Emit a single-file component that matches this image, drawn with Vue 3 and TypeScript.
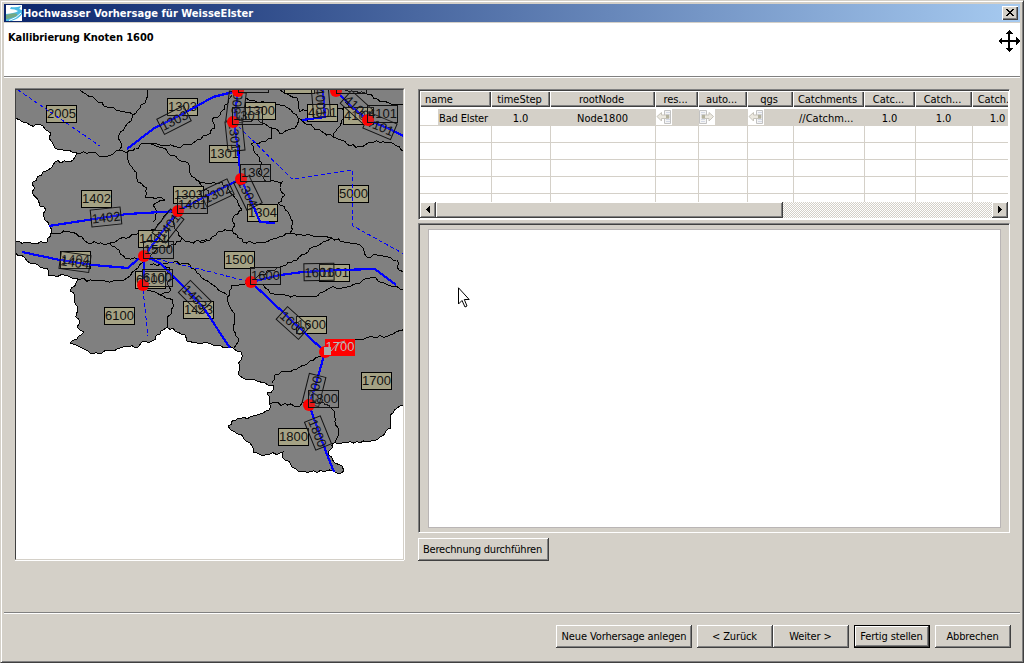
<script setup lang="ts">
type Point = [number, number]
interface Label { x: number; y: number; text: string }
interface TurnedLabel extends Label { angle: number }

function parse(source: string): Point[] {
  return source.trim().split(/\s+/).map((p) => p.split(',').map(Number) as Point)
}

function straight(source: string): string {
  return 'M' + parse(source).map((p) => p.join(' ')).join('L')
}

// Breaks a border into short steps so that it reads as a natural watershed line.
function rough(source: string): string {
  const points = parse(source)
  const out: string[] = []
  points.forEach((p, i) => {
    out.push(`${p[0]} ${p[1]}`)
    const next = points[i + 1]
    if (!next) return
    const dx = next[0] - p[0]
    const dy = next[1] - p[1]
    const length = Math.hypot(dx, dy)
    if ((p[0] <= 15 && next[0] <= 15) || (p[0] >= 404 && next[0] >= 404)) return
    const steps = Math.floor(length / 3)
    for (let k = 1; k < steps; k++) {
      const t = k / steps
      const seed = Math.sin((p[0] + dx * t) * 12.99 + (p[1] + dy * t) * 78.23) * 43758.5
      const offset = (seed - Math.floor(seed) - 0.5) * 3
      out.push(`${(p[0] + dx * t - (dy / length) * offset).toFixed(1)} ${(p[1] + dy * t + (dx / length) * offset).toFixed(1)}`)
    }
  })
  return 'M' + out.join('L')
}

const land = rough('15,88 15,118 23,122 30,125 43,126 46,130 51,133 49,138 52,142 55,148 63,150 77,153 75,157 70,162 55,162 52,167 43,172 33,182 35,188 32,192 38,200 40,206 46,210 44,217 49,225 51,233 47,242 34,243 28,242 16,242 15,252 25,258 30,263 47,268 48,275 70,277 78,279 70,291 75,295 75,303 78,308 76,317 80,323 77,327 84,332 70,343 82,348 90,353 102,353 123,347 138,347 143,341 152,341 167,327 185,335 187,341 197,343 213,345 233,348 241,352 241,360 238,373 243,378 255,380 265,383 273,385 274,389 267,393 270,398 269,410 257,415 247,419 238,418 228,426 235,432 243,437 250,443 253,452 263,456 283,452 283,458 298,471 333,471 340,474 344,471 342,466 335,463 328,455 332,444 347,443 367,442 380,437 391,428 390,418 397,408 404,406 405,88')

const borders = [
  '80,90 93,97 107,107 127,113 133,115',
  '148,90 146,100 140,108 133,115 131,121 125,127 119,135 121,143 119,151',
  '77,153 93,152 102,157 113,154 120,150 127,153 135,148 147,143 160,145 177,147 190,145 197,140 207,135 215,128 212,120 220,115 225,105 232,95',
  '127,153 130,165 137,173 138,182 147,188 145,197 160,197 165,200 153,205 157,213 153,222',
  '147,143 163,148 170,155 188,163 190,173 200,182 210,184 222,182 233,195 242,210 233,218 235,225 232,230 218,232 210,240 200,242',
  '238,120 250,122 258,120 272,128',
  '246,98 257,102 280,105 288,108 298,118 295,128 283,133 272,128 272,138 265,142 251,144 255,153 262,163 258,173 268,182 282,182 280,188 285,195 278,203 288,212 293,222 290,233',
  '280,90 297,98 300,112 317,107 350,110 342,120 333,137 347,144 362,147 370,142 390,142 404,152',
  '298,118 313,127 333,137',
  '345,90 365,93 383,102 404,105',
  '350,110 345,99 340,94',
  '232,230 243,242 260,243 277,238 290,233 310,235 332,238',
  '251,282 262,274 280,267 297,260 313,247 332,238 350,243 360,245 367,257 377,255 397,260 399,270 404,272',
  '263,285 270,293 285,295 300,297 315,297 330,288 347,287 360,283 372,277 388,285 404,289',
  '250,283 232,285 230,295 227,297 230,307 235,317 233,327 238,338 234,348',
  '150,265 170,262 190,265 197,273 210,283 217,288 227,295',
  '325,350 334,343 347,340 373,337 390,335 404,328',
  '272,383 275,375 293,370 310,361 323,355',
  '269,403 300,406 305,402 323,402 335,413 335,422 339,432 335,442 331,446',
  '51,233 70,232 82,237 88,243 110,243 135,235 155,230 164,216 177,211',
  '110,243 117,249 125,258 140,260',
  '78,279 93,281 113,281 127,278 135,270 143,262',
  '147,290 160,295 173,300 172,312 167,320 167,327',
  '150,257 160,247 175,245 182,238 190,242 210,241',
  '182,238 175,229 173,221 181,213',
  '154,278 165,276 170,268 158,264',
  '160,295 171,290 167,283 176,278',
  '198,180 203,191 209,191 208,199',
].map(rough)

const rivers = [
  '127,149 153,129 190,110 213,97 233,92 238,91',
  '49,226 127,214 178,211',
  '238,91 234,122 238,150 241,179',
  '241,179 206,196 178,211 160,235 147,252',
  '241,179 255,210 260,222 275,223',
  '302,120 325,117 323,90',
  '336,91 352,107 368,120 385,127 404,136',
  '22,252 60,260 93,265 128,268 138,259 144,256 144,285',
  '144,256 160,263 185,288 203,307 230,348',
  '251,282 280,275 303,272 340,270 375,269 396,285',
  '251,282 325,352 315,387 309,405 326,452 334,472',
].map(straight)

const dashed = [
  '18,90 100,146',
  '234,122 292,179 352,170 353,226 404,254',
  '144,256 203,270 250,282',
  '143,290 148,336',
].map(straight)

const catchments: Label[] = [
  { x: 46, y: 105, text: '2005' }, { x: 167, y: 98, text: '1303' },
  { x: 81, y: 190, text: '1402' }, { x: 173, y: 186, text: '1303' },
  { x: 138, y: 230, text: '1401' }, { x: 60, y: 251, text: '1404' },
  { x: 135, y: 271, text: '6100' }, { x: 104, y: 307, text: '6100' },
  { x: 183, y: 301, text: '1453' }, { x: 245, y: 102, text: '1300' },
  { x: 209, y: 145, text: '1301' }, { x: 247, y: 204, text: '1304' },
  { x: 338, y: 185, text: '5000' }, { x: 307, y: 104, text: '4001' },
  { x: 343, y: 107, text: '4101' }, { x: 284, y: 76, text: '4000' },
  { x: 224, y: 251, text: '1500' }, { x: 319, y: 264, text: '1601' },
  { x: 296, y: 316, text: '1600' }, { x: 361, y: 372, text: '1700' },
  { x: 278, y: 428, text: '1800' },
]

const nodeLabels: Label[] = [
  { x: 177, y: 196, text: '1401' }, { x: 143, y: 241, text: '1500' },
  { x: 142, y: 269, text: '6100' }, { x: 232, y: 107, text: '1301' },
  { x: 240, y: 164, text: '1302' }, { x: 367, y: 105, text: '4101' },
  { x: 238, y: 75, text: '1300' }, { x: 336, y: 76, text: '4100' },
  { x: 250, y: 267, text: '1600' }, { x: 308, y: 390, text: '1800' },
]

const riverLabels: TurnedLabel[] = [
  { x: 174, y: 120, text: '1303', angle: -27 }, { x: 106, y: 217, text: '1402', angle: -6 },
  { x: 75, y: 262, text: '1404', angle: 8 }, { x: 217, y: 193, text: '1302', angle: -25 },
  { x: 248, y: 193, text: '1304', angle: 64 }, { x: 236, y: 107, text: '1300', angle: -83 },
  { x: 235, y: 136, text: '1301', angle: 84 }, { x: 195, y: 297, text: '1453', angle: 45 },
  { x: 168, y: 226, text: '1401', angle: -52 }, { x: 293, y: 323, text: '1600', angle: 42 },
  { x: 319, y: 272, text: '1601', angle: -1 }, { x: 314, y: 390, text: '1700', angle: -76 },
  { x: 318, y: 433, text: '1800', angle: 68 }, { x: 321, y: 102, text: '4001', angle: 85 },
  { x: 357, y: 107, text: '4100', angle: 42 }, { x: 380, y: 126, text: '4101', angle: 23 },
]

const nodes: Point[] = [[238, 91], [233, 122], [241, 179], [178, 211], [144, 256], [143, 285], [251, 282], [325, 352], [309, 405], [336, 91], [368, 120]]

const columns = ['name', 'timeStep', 'rootNode', 'res...', 'auto...', 'qgs', 'Catchments', 'Catc...', 'Catch...', 'Catch...']
const emptyRows = 5
</script>

<template>
  <main class="window">
    <header class="titlebar">
      <svg class="logo" width="16" height="16" viewBox="0 0 16 16">
        <rect width="16" height="16" fill="#fff" />
        <path d="M5 2Q10 3 15 1L14 3Q12 4 16 5V9Q13 14 5 16H0V9Q10 8 12 6Q9 4 4 4Z" fill="#4bbbe4" />
        <path d="M0 10Q9 7 11 9T5 13Q2 14 0 14Z" fill="#74a884" />
        <path d="M3 15.500Q11 13 15 8" stroke="#fff" fill="none" />
      </svg>
      <h1>Hochwasser Vorhersage für WeisseElster</h1>
      <button class="close" aria-label="Schließen">
        <svg width="8" height="7" viewBox="0 0 8 7" shape-rendering="crispEdges"><path d="M0 0h2v1h1v1h2v-1h1v-1h2v1h-1v1h-1v1h-1v1h1v1h1v1h1v1h-2v-1h-1v-1h-2v1h-1v1h-2v-1h1v-1h1v-1h1v-1h-1v-1h-1v-1h-1z" /></svg>
      </button>
    </header>

    <section class="banner">
      <h2>Kallibrierung Knoten 1600</h2>
      <svg width="22" height="22" viewBox="0 0 22 22" shape-rendering="crispEdges">
        <path d="M10 2h2v8h8v2h-8v8h-2v-8h-8v-2h8z" />
        <path d="M11 0L15 4H7ZM11 22L15 18H7ZM0 11L4 7V15ZM22 11L18 7V15Z" />
      </svg>
    </section>

    <section class="content">
      <div class="map">
        <svg width="387" height="469" viewBox="16 90 387 469">
          <g shape-rendering="crispEdges">
            <path :d="land" fill="#808080" stroke="#000" />
            <path v-for="(d, i) in borders" :key="i" :d="d" fill="none" stroke="#000" />
          </g>
          <g v-for="(l, i) in catchments" :key="'c' + i">
            <rect :x="l.x + 0.5" :y="l.y + 0.5" width="30" height="17" fill="#a5a284" stroke="#000" />
            <text class="num" :x="l.x + 15.5" :y="l.y + 13">{{ l.text }}</text>
          </g>
          <g fill="none" stroke="#00f" shape-rendering="crispEdges">
            <path v-for="(d, i) in rivers" :key="'r' + i" :d="d" stroke-width="2.2" />
            <path v-for="(d, i) in dashed" :key="'d' + i" :d="d" stroke-dasharray="4 2.5" />
          </g>
          <g v-for="(l, i) in riverLabels" :key="'t' + i" :transform="`rotate(${l.angle} ${l.x} ${l.y})`">
            <rect :x="l.x - 15" :y="l.y - 8.5" width="30" height="17" class="glass" />
            <text class="num" :x="l.x" :y="l.y + 5">{{ l.text }}</text>
          </g>
          <circle v-for="(n, i) in nodes" :key="'n' + i" :cx="n[0]" :cy="n[1]" r="6" fill="#f00" />
          <g v-for="(l, i) in nodeLabels" :key="'l' + i">
            <rect :x="l.x + 0.5" :y="l.y + 0.5" width="30" height="17" class="glass" />
            <text class="num" :x="l.x + 15.5" :y="l.y + 13">{{ l.text }}</text>
          </g>
          <rect x="325" y="339" width="30" height="17" fill="#f00" />
          <text class="num picked" x="340" y="351">1700</text>
          <rect x="324" y="347" width="7" height="8" fill="#aaa" />
          <path d="M331 351L338 343L345 341" fill="none" stroke="#aaa" />
        </svg>
      </div>

      <div class="side">
        <div class="tableframe">
          <div class="row head">
            <span v-for="(c, i) in columns" :key="i" :class="{ first: i === 0 }"><b>{{ c }}</b></span>
          </div>
          <div class="row data">
            <span class="first"><i class="blank"></i>Bad Elster</span>
            <span>1.0</span>
            <span>Node1800</span>
            <span class="iconcell"><svg width="16" height="16" viewBox="0 0 16 16"><rect width="16" height="16" fill="#fff" /><path d="M8.500 1.500h6v13h-6z" fill="#f4f4f4" stroke="#c2c2c2" /><path d="M10 3.500h4M10 5.500h4M10 10.500h4M10 12.500h4" stroke="#d3d8e4" /><path d="M1 7.500L5.500 3.500V6H13V9.500H5.500V12Z" fill="#ece9e0" stroke="#c6c3ba" /><rect x="10" y="6" width="3" height="3" fill="#b4b29e" /></svg></span>
            <span class="iconcell"><svg width="16" height="16" viewBox="0 0 16 16"><rect width="16" height="16" fill="#fff" /><path d="M.500 1.500h7v13h-7z" fill="#f4f4f4" stroke="#c2c2c2" /><path d="M2 3.500h4M2 5.500h4M2 10.500h4M2 12.500h4" stroke="#d3d8e4" /><path d="M14.500 7.500L10 3.500V6H3V9.500H10V12Z" fill="#ece9e0" stroke="#c6c3ba" /><rect x="3" y="6" width="3" height="3" fill="#b4b29e" /></svg></span>
            <span class="iconcell"><svg width="16" height="16" viewBox="0 0 16 16"><rect width="16" height="16" fill="#fff" /><path d="M8.500 1.500h6v13h-6z" fill="#f4f4f4" stroke="#c2c2c2" /><path d="M10 3.500h4M10 5.500h4M10 10.500h4M10 12.500h4" stroke="#d3d8e4" /><path d="M1 7.500L5.500 3.500V6H13V9.500H5.500V12Z" fill="#ece9e0" stroke="#c6c3ba" /><rect x="10" y="6" width="3" height="3" fill="#b4b29e" /></svg></span>
            <span class="path">//Catchm...</span>
            <span>1.0</span>
            <span>1.0</span>
            <span>1.0</span>
          </div>
          <div v-for="r in emptyRows" :key="r" class="row"><span v-for="c in columns.length" :key="c"></span></div>
          <div class="scrollbar">
            <div class="arrow"><svg width="4" height="7" viewBox="0 0 4 7" shape-rendering="crispEdges"><path d="M4 0V7L0 3.500Z" /></svg></div>
            <div class="thumb"></div>
            <div class="track"></div>
            <div class="arrow"><svg width="4" height="7" viewBox="0 0 4 7" shape-rendering="crispEdges"><path d="M0 0V7L4 3.500Z" /></svg></div>
          </div>
        </div>
        <div class="chartframe"><div class="chart"></div></div>
        <button class="btn calc"><span>Berechnung durchführen</span></button>
      </div>
    </section>

    <footer>
      <button class="btn new"><span>Neue Vorhersage anlegen</span></button>
      <button class="btn back"><span>&lt; Zurück</span></button>
      <button class="btn next"><span>Weiter &gt;</span></button>
      <button class="btn finish"><span>Fertig stellen</span></button>
      <button class="btn cancel"><span>Abbrechen</span></button>
    </footer>

    <svg class="pointer" width="13" height="21" viewBox="0 0 13 21"><path d="M1.500 .8V17L5 13.500L8 20L10 19L7.300 12.500H12.200Z" fill="#fff" stroke="#000" /></svg>
  </main>
</template>

<style>
body { margin: 0; overflow: hidden; }
</style>

<style scoped>
* { box-sizing: border-box; }
.window {
  position: relative; width: 1024px; height: 663px; padding: 2px; display: flex; flex-direction: column;
  background: #d4d0c8; border: 1px solid; border-color: #d4d0c8 #404040 #404040 #d4d0c8;
  box-shadow: inset 1px 1px #fff, inset -1px -1px #808080;
  font: 11px/14px "DejaVu Sans Condensed", "DejaVu Sans", sans-serif; font-stretch: condensed; color: #000;
}
h1, h2 { margin: 0; font: bold 11px/14px "DejaVu Sans Condensed", "DejaVu Sans", sans-serif; font-stretch: condensed; white-space: nowrap; }
.titlebar { height: 18px; margin: 1px 1px 0; display: flex; align-items: center; background: linear-gradient(90deg, #0a246a, #a6caf0); color: #fff; flex: none; }
.logo { margin: 0 1px 0 2px; }
h1 { flex: 1; padding-top: 1px; letter-spacing: .03px; }
.close { width: 16px; height: 14px; margin-right: 2px; padding: 0 1px 1px 0; display: grid; place-items: center; border: 0; background: #d4d0c8; box-shadow: inset 1px 1px #fff, inset -1px -1px #404040, inset -2px -2px #808080; }
.banner { height: 54px; margin: 1px 1px 0; background: #fff; border-bottom: 1px solid #808080; box-shadow: 0 1px #fff; display: flex; justify-content: space-between; flex: none; }
h2 { margin: 8px 0 0 4px; letter-spacing: -.06px; }
.banner svg { margin: 7px 0 0 0; }
.content { display: flex; gap: 14px; margin: 12px 0 0 12px; height: 523px; flex: none; }
.map { width: 389px; height: 471px; border: 1px solid; border-color: #404040 #d4d0c8 #d4d0c8 #404040; box-shadow: 0 -1px #808080, 1px 0 #fff, 0 1px #fff; background: #fff; overflow: hidden; }
.map svg { display: block; }
.num { font: 13px "Liberation Sans", Arial, sans-serif; text-anchor: middle; fill: #111; }
.picked { fill: #bbb; }
.glass { fill: #808080; fill-opacity: .2; stroke: #111; }
.side { width: 592px; }
.tableframe { height: 131px; padding: 1px; border: 1px solid; border-color: #808080 #fff #fff #808080; box-shadow: inset 1px 1px #404040; background: #fff; overflow: hidden; }
.row { width: 588px; display: grid; grid-template-columns: 72px 59px 105px 43px 49px 46px 71px 51px 57px 51px; height: 17px; overflow: hidden; }
.row span { border: solid #d4d0c8; border-width: 0 1px 1px 0; white-space: nowrap; overflow: hidden; text-align: center; line-height: 17px; }
.row.head { height: 16px; grid-template-columns: 71px 59px 105px 43px 49px 46px 71px 51px 57px 51px; }
.row.head span { height: 16px; border: 0; background: #d4d0c8; box-shadow: inset 1px 1px #fff, inset -1px -1px #404040, inset -2px -2px #808080; line-height: 18px; padding-right: 2px; letter-spacing: -.05px; }
.head b { font-weight: normal; }
.row.head .first { text-align: left; padding-left: 5px; }
.row.data { height: 19px; padding-top: 2px; }
.row.data span { background: #d4d0c8; padding-right: 1px; line-height: 19px; }
.row.data span.first { display: flex; text-align: left; letter-spacing: -.15px; }
.blank { width: 18px; height: 16px; background: #fff; margin-right: 1px; flex: none; }
.row.data span.iconcell { text-align: left; padding: 0; }
.row.data span.path { text-align: left; padding-left: 5px; }
.iconcell svg { display: block; }
.scrollbar { display: flex; height: 16px; position: relative; margin-top: -9px; background: #d4d0c8; }
.arrow, .thumb { box-shadow: inset -1px -1px #404040, inset 1px 1px #fff, inset -2px -2px #808080; background: #d4d0c8; }
.arrow { width: 16px; display: grid; place-items: center; padding-bottom: 1px; }
.thumb { width: 347px; }
.track { flex: 1; background: repeating-conic-gradient(#fff 0 25%, #d4d0c8 0 50%) 0 0 / 2px 2px; }
.chartframe { margin-top: 3px; height: 310px; padding: 5px 8px 4px; border: 1px solid; border-color: #808080 #fff #fff #808080; box-shadow: inset 1px 1px #404040; }
.chart { height: 299px; width: 573px; margin-left: 1px; border: 1px solid #b9b5b5; background: #fff; }
.btn { height: 23px; padding: 0; border: 0; background: #d4d0c8; font: inherit; color: #000; white-space: nowrap; letter-spacing: -.13px; box-shadow: inset -1px -1px #404040, inset 1px 1px #fff, inset -2px -2px #808080; }
.calc { display: block; width: 131px; margin-top: 5px; padding-right: 2px; letter-spacing: -.18px; }
footer { display: flex; margin: 0 1px; height: 47px; border-top: 1px solid #808080; box-shadow: inset 0 1px #fff; padding: 12px 9px 0 0; justify-content: flex-end; }
.new { width: 136px; margin-right: 5px; }
.back, .next, .finish, .cancel { width: 76px; padding-right: 1px; }
.next { margin-right: 5px; }
.finish { margin-right: 5px; border: 1px solid #000; }
.pointer { position: absolute; left: 456px; top: 286px; }
</style>
